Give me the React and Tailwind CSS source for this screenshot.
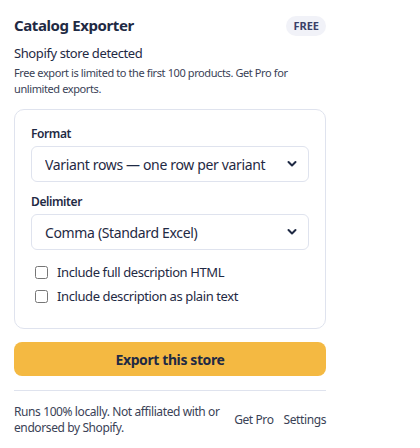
import React from "react";

function Chevron() {
  return (
    <svg className="pointer-events-none absolute right-[12px] top-1/2 -translate-y-1/2" width="10" height="7" viewBox="0 0 10 7">
      <path d="M1.5 1.5 L5 5 L8.5 1.5" fill="none" stroke="#1f2a44" strokeWidth="2" strokeLinecap="round" strokeLinejoin="round" />
    </svg>
  );
}

function Select({ value }) {
  return (
    <div className="relative">
      <select
        defaultValue={value}
        className="w-full h-[36px] appearance-none rounded-[6px] border border-[#dfe3ee] bg-white pl-[13px] pr-8 text-[14px] tracking-[-0.025em] text-[#1f2a44] outline-none"
      >
        <option>{value}</option>
      </select>
      <Chevron />
    </div>
  );
}

export default function App() {
  return (
    <div
      className="w-[340px] bg-white px-[14px] pt-[15px] text-[#1f2a44] tracking-[-0.025em]"
      style={{ fontFamily: '"Noto Sans", "Open Sans", sans-serif' }}
    >
      <div className="flex items-center justify-between h-[21px]">
        <h1 className="text-[15px] font-bold leading-none">Catalog Exporter</h1>
        <span className="rounded-full bg-[#f1f2f8] px-[7px] py-[3px] text-[11px] font-bold leading-[14px] tracking-normal text-[#3a4068]">FREE</span>
      </div>
      <p className="mt-[8px] text-[13px] leading-[18px]">Shopify store detected</p>
      <p className="mt-[3px] text-[11px] leading-[16px] text-[#3a4256]">
        Free export is limited to the first 100 products. Get Pro for unlimited exports.
      </p>
      <div className="mt-[12px] rounded-[10px] border border-[#dfe3ee] px-[16px] pt-[16px] pb-[25px]">
        <label className="block text-[12px] font-semibold leading-[16px] mb-[4px]">Format</label>
        <Select value="Variant rows — one row per variant" />
        <label className="block mt-[12px] text-[12px] font-semibold leading-[16px] mb-[4px]">Delimiter</label>
        <Select value="Comma (Standard Excel)" />
        <div className="mt-[15px] flex flex-col gap-[10px]">
          <label className="flex items-center gap-[9px] text-[13px] leading-[14px] pl-[4px]">
            <input type="checkbox" className="m-0 h-[13px] w-[13px]" />
            Include full description HTML
          </label>
          <label className="flex items-center gap-[9px] text-[13px] leading-[14px] pl-[4px]">
            <input type="checkbox" className="m-0 h-[13px] w-[13px]" />
            Include description as plain text
          </label>
        </div>
      </div>
      <button className="mt-[13px] h-[34px] w-full rounded-[8px] bg-[#f4b942] text-[14px] font-bold text-[#1f2a44]">
        Export this store
      </button>
      <div className="mt-[14px] border-t border-[#dfe3ee] pt-[13px] flex items-center justify-between">
        <p className="w-[215px] text-[12px] leading-[16px] text-[#3a4256]">
          Runs 100% locally. Not affiliated with or endorsed by Shopify.
        </p>
        <div className="flex gap-[10px] text-[12px] text-[#3a4256]">
          <a>Get Pro</a>
          <a>Settings</a>
        </div>
      </div>
    </div>
  );
}
